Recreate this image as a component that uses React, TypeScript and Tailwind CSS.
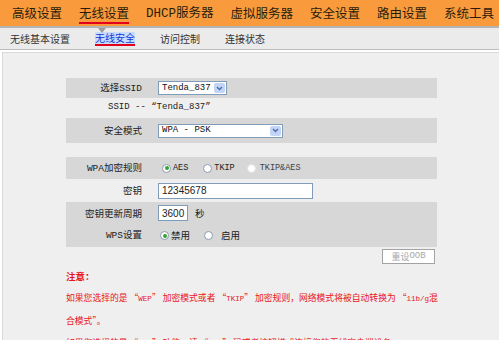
import React from 'react';

const CJK = '"Noto Sans CJK SC", "Liberation Sans", sans-serif';
const MONO = '"Liberation Mono", "Noto Sans CJK SC", monospace';

function Radio({ checked, disabled }: { checked?: boolean; disabled?: boolean }) {
    return (
        <span
            className={
                'inline-flex items-center justify-center w-[9px] h-[9px] rounded-full border bg-white ' +
                (disabled ? 'border-[#e2e2e2]' : 'border-[#8b9bb0]')
            }
        >
            {checked && <span className="w-[4px] h-[4px] rounded-full bg-[#2fa52f]" />}
        </span>
    );
}

function Select({ value, width }: { value: string; width: string }) {
    return (
        <div className={`${width} h-[14px] flex items-center justify-between bg-white border border-[#7f9db9] pl-[3px] pr-[1px]`}>
            <span style={{ fontFamily: MONO }} className="text-[9px] text-[#111] leading-none">{value}</span>
            <span className="w-[11px] h-[10px] rounded-[2px] bg-[#c3d5f6] flex items-center justify-center">
                <svg width="7" height="5" viewBox="0 0 7 5">
                    <path d="M1 1 L3.5 3.5 L6 1" fill="none" stroke="#4d6aa8" strokeWidth="1.4" />
                </svg>
            </span>
        </div>
    );
}

function Row({ label, gray, h, children }: { label: React.ReactNode; gray?: boolean; h: string; children: React.ReactNode }) {
    return (
        <div className={`${h} flex items-center ${gray ? 'bg-[#d7d7d7]' : ''}`}>
            <div className="w-[92px] pr-[16px] text-right">{label}</div>
            <div className="flex items-center">{children}</div>
        </div>
    );
}

function M({ children }: { children: React.ReactNode }) {
    return <span style={{ fontFamily: MONO }} className="text-[7.5px]">{children}</span>;
}

export default function App() {
    const nav = ['高级设置', '无线设置', 'DHCP服务器', '虚拟服务器', '安全设置', '路由设置', '系统工具'];
    const sub = ['无线基本设置', '无线安全', '访问控制', '连接状态'];

    return (
        <div className="w-[499px] h-[340px] overflow-hidden bg-white text-[#222]" style={{ fontFamily: CJK }}>
            {/* top menu */}
            <div className="h-[26px] bg-[#f99b3d] flex items-center pl-[12px] gap-[17px] text-[12.5px] text-[#2a1b0b]">
                {nav.map((n, i) => (
                    <span key={n} className={'relative leading-none ' + (i === 1 ? 'after:absolute after:left-0 after:right-0 after:top-[15px] after:h-[2px] after:bg-[#e3001b]' : '')}>
                        {n.startsWith('DHCP') ? (
                            <>
                                <span style={{ fontFamily: MONO }}>DHCP</span>服务器
                            </>
                        ) : (
                            n
                        )}
                    </span>
                ))}
            </div>

            {/* sub menu */}
            <div className="relative h-[24px] bg-[#ebebeb] border-t-2 border-[#b4b4b4] border-b border-b-[#bcbcbc] flex items-center pl-[10px] gap-[25px] text-[10px] text-[#333]">
                <span className="absolute left-[98px] top-0 w-0 h-0 border-l-[4px] border-r-[4px] border-t-[5px] border-l-transparent border-r-transparent border-t-[#9c9c9c]" />
                {sub.map((s, i) => (
                    <span
                        key={s}
                        className={'leading-[12px] ' + (i === 1 ? 'bg-[#c9dcff] text-[#1236d6] border-b-2 border-[#e3001b]' : '')}
                    >
                        {s}
                    </span>
                ))}
            </div>

            {/* content */}
            <div className="mt-[2px] ml-[2px] h-[300px] bg-[#efefef] border-l border-t border-[#d9d9d9] pt-[25px] text-[9.5px] text-[#222]">
                <div className="ml-[63px] w-[371px]">
                    <Row gray h="h-[20px]" label={<>选择<span style={{ fontFamily: MONO }}>SSID</span></>}>
                        <Select value="Tenda_837" width="w-[69px]" />
                    </Row>
                    <div className="h-[20px] flex items-center pl-[42px]" style={{ fontFamily: MONO }}>
                        <span className="text-[9px]">SSID -- “Tenda_837”</span>
                    </div>
                    <Row gray h="h-[25px]" label="安全模式">
                        <Select value="WPA - PSK" width="w-[125px]" />
                    </Row>

                    <div className="h-[14px]" />

                    <Row gray h="h-[22px]" label={<><span style={{ fontFamily: MONO }}>WPA</span>加密规则</>}>
                        <div className="flex items-center gap-[2px] ml-[4px]">
                            <Radio checked />
                            <span style={{ fontFamily: MONO }} className="text-[8.5px]">AES</span>
                        </div>
                        <div className="flex items-center gap-[2px] ml-[15px]">
                            <Radio />
                            <span style={{ fontFamily: MONO }} className="text-[8.5px]">TKIP</span>
                        </div>
                        <div className="flex items-center gap-[4px] ml-[12px]">
                            <Radio disabled />
                            <span style={{ fontFamily: MONO }} className="text-[8.5px] text-[#444]">TKIP&amp;AES</span>
                        </div>
                    </Row>
                    <Row h="h-[23px]" label="密钥">
                        <div className="w-[155px] h-[16px] bg-white border border-[#7f9db9] flex items-center pl-[3px]">
                            <span style={{ fontFamily: '"Liberation Sans", sans-serif' }} className="text-[10px]">12345678</span>
                        </div>
                    </Row>
                    <div className="bg-[#d7d7d7]">
                        <Row h="h-[22px]" label="密钥更新周期">
                            <div className="w-[30px] h-[16px] bg-white border border-[#7f9db9] flex items-center pl-[3px]">
                                <span style={{ fontFamily: '"Liberation Sans", sans-serif' }} className="text-[10px]">3600</span>
                            </div>
                            <span className="ml-[7px]">秒</span>
                        </Row>
                        <Row h="h-[23px]" label={<><span style={{ fontFamily: MONO }}>WPS</span>设置</>}>
                            <div className="flex items-center gap-[2px] ml-[2px]">
                                <Radio checked />
                                <span>禁用</span>
                            </div>
                            <div className="flex items-center gap-[8px] ml-[14px]">
                                <Radio />
                                <span>启用</span>
                            </div>
                        </Row>
                    </div>

                    <div className="flex justify-end pr-[2px] pt-[2px]">
                        <button className="w-[53px] h-[15px] bg-white border border-[#a2a2a2] text-[#a8a8a8] text-[9px] leading-none flex items-center justify-center">
                            重设<span style={{ fontFamily: MONO }}>OOB</span>
                        </button>
                    </div>
                </div>

                {/* notes */}
                <div className="ml-[63px] w-[374px] mt-[1px] text-[#e8161e] text-[8.8px] leading-[22px]">
                    <div className="font-bold text-[9.5px]">注意：</div>
                    <p>
                        如果您选择的是 “<M>WEP</M>” 加密模式或者 “<M>TKIP</M>” 加密规则，网络模式将被自动转换为 “<M>11b/g</M>混合模式”。
                    </p>
                    <p>
                        如果您选择的是 “<M>WPS</M>” 功能，请 “<M>PIN</M>” 码或者按钮模式连接您的无线客户端设备。
                    </p>
                </div>
            </div>
        </div>
    );
}
